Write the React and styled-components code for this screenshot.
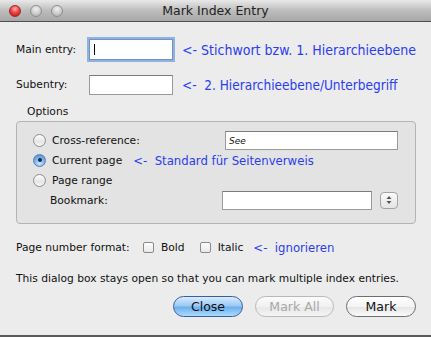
import React from "react";
import styled, { createGlobalStyle } from "styled-components";

const Global = createGlobalStyle`
  html, body { margin: 0; padding: 0; background: #ececec; }
  body { font-family: "DejaVu Sans", "Liberation Sans", sans-serif; }
`;

const Window = styled.div`
  width: 431px;
  height: 337px;
  background: #ececec;
  display: flex;
  flex-direction: column;
  box-sizing: border-box;
  border-bottom: 2px solid #5a5a5a;
  overflow: hidden;
`;

const TitleBar = styled.div`
  height: 21px;
  flex: none;
  background: linear-gradient(#e9e9e9, #bdbdbd 50%, #a7a7a7);
  border-bottom: 1px solid #4f4f4f;
  display: flex;
  align-items: center;
  position: relative;
  padding-left: 9px;
  gap: 9px;
`;

const Light = styled.span`
  width: 12px;
  height: 12px;
  border-radius: 50%;
  box-sizing: border-box;
  border: 1px solid ${(p) => (p.$red ? "#9b2a2a" : "#8e8e8e")};
  background: ${(p) =>
    p.$red
      ? "radial-gradient(circle at 50% 30%, #ffb0b0 0%, #f04545 45%, #b50c0c 100%)"
      : "radial-gradient(circle at 50% 30%, #f0f0f0 0%, #cfcfcf 50%, #a8a8a8 100%)"};
`;

const Title = styled.div`
  position: absolute;
  left: 0;
  right: 0;
  top: 0;
  bottom: 0;
  display: flex;
  align-items: center;
  justify-content: center;
  font-size: 12.5px;
  color: #222;
  pointer-events: none;
`;

const Body = styled.div`
  flex: 1;
  padding: 16px 15px 0 16px;
  display: flex;
  flex-direction: column;
  font-size: 10.7px;
  color: #111;
`;

const FieldRow = styled.div`
  display: flex;
  align-items: center;
  height: 23px;
  margin-bottom: ${(p) => p.$mb || 0}px;
`;

const Label = styled.span`
  width: ${(p) => p.$w || 73}px;
  flex: none;
`;

const TextBox = styled.div`
  width: ${(p) => p.$w}px;
  height: ${(p) => p.$h || 20}px;
  box-sizing: border-box;
  background: #fff;
  border: 1px solid #9a9a9a;
  border-top-color: #7c7c7c;
  flex: none;
  margin-left: ${(p) => p.$ml || 0}px;
  font-size: 9px;
  font-style: italic;
  padding: 4px 0 0 3px;
  position: relative;
`;

const FocusBox = styled(TextBox)`
  border: 1px solid #6f93c6;
  box-shadow: 0 0 0 2px #8fb2e3;
  &::after {
    content: "";
    position: absolute;
    left: 4px;
    top: 4px;
    width: 1px;
    height: 11px;
    background: #000;
  }
`;

const Note = styled.span`
  font-family: "DejaVu Sans Condensed", "Liberation Sans Narrow", sans-serif;
  font-size: ${(p) => p.$fs || 13.5}px;
  color: #2b3df2;
  margin-left: ${(p) => p.$ml || 9}px;
  white-space: pre;
`;

const GroupTitle = styled.div`
  margin: 0 0 2px 11px;
  height: 14px;
  line-height: 14px;
`;

const Group = styled.div`
  border: 1px solid #b3b3b3;
  border-radius: 4px;
  background: #e3e3e3;
  height: 103px;
  box-sizing: border-box;
  padding: 8px 16px 0 16px;
  display: flex;
  flex-direction: column;
`;

const OptionRow = styled.div`
  display: flex;
  align-items: center;
  height: 20px;
`;

const Radio = styled.span`
  width: 13px;
  height: 13px;
  box-sizing: border-box;
  border-radius: 50%;
  flex: none;
  margin-right: 6px;
  position: relative;
  border: 1px solid ${(p) => (p.$on ? "#5a7db5" : "#8d8d8d")};
  background: ${(p) =>
    p.$on
      ? "radial-gradient(circle at 50% 75%, #cfe6ff 0%, #7eb2ea 50%, #4d86cf 100%)"
      : "linear-gradient(#fdfdfd, #e6e6e6 60%, #f7f7f7)"};
  &::after {
    content: "";
    display: ${(p) => (p.$on ? "block" : "none")};
    position: absolute;
    left: 3.5px;
    top: 3.5px;
    width: 4px;
    height: 4px;
    border-radius: 50%;
    background: #142b4d;
  }
`;

const OptionLabel = styled.span`
  box-sizing: border-box;
  width: ${(p) => p.$w || "auto"};
  padding-left: ${(p) => p.$pl || 0}px;
  flex: none;
`;

const Stepper = styled.div`
  width: 18px;
  height: 17px;
  box-sizing: border-box;
  margin-left: 8px;
  border: 1px solid #a3a3a3;
  border-radius: 4px;
  background: linear-gradient(#fafafa, #e4e4e4);
  display: flex;
  align-items: center;
  justify-content: center;
`;

const Check = styled.span`
  width: 11px;
  height: 11px;
  box-sizing: border-box;
  border: 1px solid #8a8a8a;
  border-radius: 2px;
  background: linear-gradient(#fdfdfd, #e8e8e8);
  flex: none;
  margin: 0 7px 0 ${(p) => p.$ml || 0}px;
`;

const FormatRow = styled(FieldRow)`
  margin-top: 12px;
`;

const Info = styled.div`
  margin-top: 12px;
  height: 16px;
  line-height: 16px;
`;

const ButtonBar = styled.div`
  display: flex;
  justify-content: flex-end;
  gap: 12px;
  margin-top: 9px;
`;

const Button = styled.div`
  width: ${(p) => p.$w}px;
  height: 21px;
  box-sizing: border-box;
  border-radius: 11px;
  display: flex;
  align-items: center;
  justify-content: center;
  font-size: 12.5px;
  border: 1px solid
    ${(p) => (p.$primary ? "#3d5e96" : p.$disabled ? "#b9b9b9" : "#6e6e6e")};
  color: ${(p) => (p.$disabled ? "#a8a8a8" : "#111")};
  background: ${(p) =>
    p.$primary
      ? "linear-gradient(#d8ebff, #9ccaf5 45%, #6fb0ee 55%, #a9dcff)"
      : p.$disabled
      ? "linear-gradient(#fbfbfb, #f1f1f1 50%, #e8e8e8 55%, #f5f5f5)"
      : "linear-gradient(#ffffff, #f4f4f4 50%, #e6e6e6 55%, #fafafa)"};
`;

export default function App() {
  return (
    <Window>
      <Global />
      <TitleBar>
        <Light $red />
        <Light />
        <Light />
        <Title>Mark Index Entry</Title>
      </TitleBar>
      <Body>
        <FieldRow $mb={12}>
          <Label>Main entry:</Label>
          <FocusBox $w={84} $h={21} />
          <Note $fs={14}>{"<- Stichwort bzw. 1. Hierarchieebene"}</Note>
        </FieldRow>
        <FieldRow $mb={9}>
          <Label>Subentry:</Label>
          <TextBox $w={84} $h={20} />
          <Note>{"<-  2. Hierarchieebene/Unterbegriff"}</Note>
        </FieldRow>
        <GroupTitle>Options</GroupTitle>
        <Group>
          <OptionRow>
            <Radio />
            <OptionLabel $w="170px">Cross-reference:</OptionLabel>
            <TextBox $w={173} $h={19} $ml={3}>See</TextBox>
          </OptionRow>
          <OptionRow>
            <Radio $on />
            <OptionLabel>Current page</OptionLabel>
            <Note $ml={11} $fs={13}>{"<-  Standard für Seitenverweis"}</Note>
          </OptionRow>
          <OptionRow>
            <Radio />
            <OptionLabel>Page range</OptionLabel>
          </OptionRow>
          <OptionRow>
            <OptionLabel $w="189px" $pl={17}>
              Bookmark:
            </OptionLabel>
            <TextBox $w={150} $h={19} />
            <Stepper>
              <svg width="6" height="10" viewBox="0 0 6 10">
                <path d="M3 1 L5.5 4 L0.5 4 Z M3 9 L5.5 6 L0.5 6 Z" fill="#555" />
              </svg>
            </Stepper>
          </OptionRow>
        </Group>
        <FormatRow>
          <OptionLabel $w="127px">Page number format:</OptionLabel>
          <Check />
          <OptionLabel>Bold</OptionLabel>
          <Check $ml={15} />
          <OptionLabel>Italic</OptionLabel>
          <Note $ml={10} $fs={13}>{"<-  ignorieren"}</Note>
        </FormatRow>
        <Info>This dialog box stays open so that you can mark multiple index entries.</Info>
        <ButtonBar>
          <Button $w={70} $primary>Close</Button>
          <Button $w={79} $disabled>Mark All</Button>
          <Button $w={70}>Mark</Button>
        </ButtonBar>
      </Body>
    </Window>
  );
}
